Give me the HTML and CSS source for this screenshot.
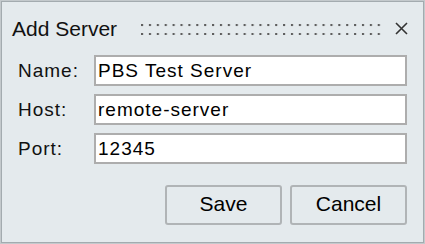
FILE: index.html
```html
<!DOCTYPE html>
<html lang="en">
<head>
  <meta charset="UTF-8" />
  <title>Add Server</title>
  <link rel="stylesheet" href="styles.css">
</head>
<body>
  <div class="dialog">
    <div class="titlebar">
      <span class="title">Add Server</span>
      <div class="grip"></div>
      <svg class="close" width="13" height="13" viewBox="0 0 13 13">
        <path d="M1 1 L12 12 M12 1 L1 12" stroke="#333" stroke-width="1.6" fill="none" />
      </svg>
    </div>

    <div class="form">
      <label class="label" for="name">Name:</label>
      <input class="field" id="name" type="text" value="PBS Test Server" />

      <label class="label" for="host">Host:</label>
      <input class="field" id="host" type="text" value="remote-server" />

      <label class="label" for="port">Port:</label>
      <input class="field" id="port" type="text" value="12345" />
    </div>

    <div class="buttons">
      <button class="btn">Save</button>
      <button class="btn">Cancel</button>
    </div>
  </div>
</body>
</html>
```

FILE: styles.css
```css
body {
  margin: 0;
  font-family: 'Liberation Sans', Arial, sans-serif;
  color: #111;
}

.dialog {
  width: 425px;
  height: 244px;
  box-sizing: border-box;
  background: #e4eaed;
  border: 1px solid #c3c9cc;
  box-shadow: inset 0 0 0 1px #a3abaf;
  padding: 1px;
}

.titlebar {
  display: flex;
  align-items: center;
  height: 53px;
  padding-left: 10px;
}

.title {
  font-size: 21px;
  color: #111;
}

.grip {
  flex: 1;
  height: 11px;
  margin: 1px 14px 0 24px;
  background-image: radial-gradient(circle at 1px 1px, #5e5e5e 1.3px, transparent 1.6px);
  background-size: 7.9px 9px;
}

.close {
  margin-right: 15px;
}

.form {
  display: grid;
  grid-template-columns: 76px 1fr;
  row-gap: 8px;
  align-items: center;
  padding: 0 16px 0 16px;
}

.label {
  font-size: 19px;
  letter-spacing: 1px;
  color: #111;
}

.field {
  height: 31px;
  box-sizing: border-box;
  border: 2px solid #adadad;
  background: #fff;
  padding: 0 2px;
  font-family: inherit;
  font-size: 19px;
  letter-spacing: 1px;
  color: #000;
  outline: none;
}

.buttons {
  display: flex;
  justify-content: flex-end;
  gap: 8px;
  padding: 21px 16px 0 0;
}

.btn {
  width: 117px;
  height: 40px;
  box-sizing: border-box;
  border: 2px solid #b0b4b6;
  border-radius: 3px;
  background: #e4eaed;
  font-family: inherit;
  font-size: 21px;
  color: #000;
  padding: 0 0 3px;
}
```
